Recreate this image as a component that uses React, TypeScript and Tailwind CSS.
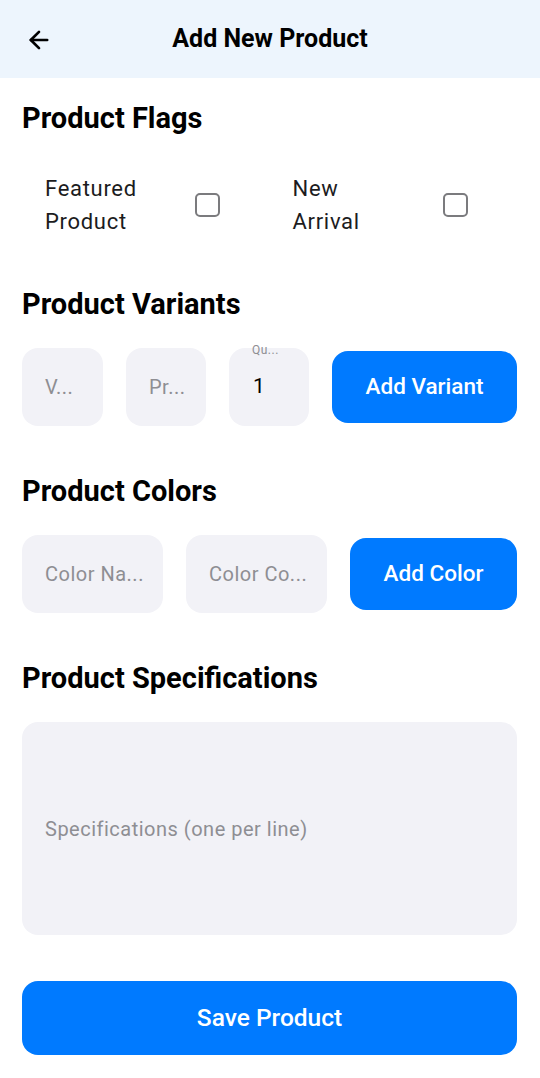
import { ArrowLeft } from 'lucide-react';

const font = { fontFamily: 'Roboto, "Noto Sans", sans-serif' };

function Heading({ children }: { children: string }) {
  return <h2 className="h-8 text-[29px] font-bold leading-8 text-black">{children}</h2>;
}

function Field({ placeholder, width }: { placeholder: string; width: string }) {
  return (
    <div className={`flex h-[78px] ${width} shrink-0 items-center rounded-2xl bg-[#f2f2f7] pl-[23px]`}>
      <span className="whitespace-nowrap text-[20px] tracking-[0.5px] text-[#8e8e93]">{placeholder}</span>
    </div>
  );
}

function FlagItem({ label }: { label: string[] }) {
  return (
    <div className="flex flex-1 items-center pl-[23px]">
      <div className="w-[150px] text-[22px] leading-[33px] tracking-[0.7px] text-[#1c1c1e]">
        {label.map((l) => (
          <div key={l}>{l}</div>
        ))}
      </div>
      <div className="h-[24px] w-[25px] rounded-[5px] border-2 border-[#7b7b7e]" />
    </div>
  );
}

export default function App() {
  return (
    <div className="min-h-[1078px] w-[540px] bg-white" style={font}>
      {/* app bar */}
      <header className="relative flex h-[78px] items-center justify-center bg-[#edf5fd]">
        <ArrowLeft className="absolute left-[25px] top-[26px] h-[28px] w-[28px] text-black" strokeWidth={2.3} />
        <h1 className="text-[25px] font-bold text-black">Add New Product</h1>
      </header>

      <main className="pl-[22px] pr-[23px]">
        <div className="pt-[24px]">
          <Heading>Product Flags</Heading>
        </div>
        <div className="mt-[38px] flex">
          <FlagItem label={['Featured', 'Product']} />
          <FlagItem label={['New', 'Arrival']} />
        </div>

        <div className="mt-[50px]">
          <Heading>Product Variants</Heading>
        </div>
        <div className="mt-[28px] flex items-center gap-[23px]">
          <Field placeholder="V..." width="w-[81px]" />
          <Field placeholder="Pr..." width="w-[80px]" />
          <div className="relative flex h-[78px] w-[80px] shrink-0 items-center rounded-2xl bg-[#f2f2f7] pl-[24px]">
            <span className="absolute left-[23px] top-[-7px] text-[12px] tracking-[0.5px] text-[#8e8e93]">Qu...</span>
            <span className="text-[21px] text-black">1</span>
          </div>
          <button className="h-[72px] flex-1 rounded-2xl bg-[#007aff] text-[22.5px] font-medium text-white">
            Add Variant
          </button>
        </div>

        <div className="mt-[49px]">
          <Heading>Product Colors</Heading>
        </div>
        <div className="mt-[28px] flex items-center gap-[23px]">
          <Field placeholder="Color Na..." width="w-[141px]" />
          <Field placeholder="Color Co..." width="w-[141px]" />
          <button className="h-[72px] flex-1 rounded-2xl bg-[#007aff] text-[22.5px] font-medium text-white">
            Add Color
          </button>
        </div>

        <div className="mt-[49px]">
          <Heading>Product Specifications</Heading>
        </div>
        <div className="mt-[28px] flex h-[213px] items-center rounded-2xl bg-[#f2f2f7] pl-[23px]">
          <span className="text-[20px] tracking-[0.5px] text-[#8e8e93]">Specifications (one per line)</span>
        </div>

        <button className="mt-[46px] h-[74px] w-full rounded-2xl bg-[#007aff] text-[24.5px] font-medium text-white">
          Save Product
        </button>
      </main>
    </div>
  );
}
